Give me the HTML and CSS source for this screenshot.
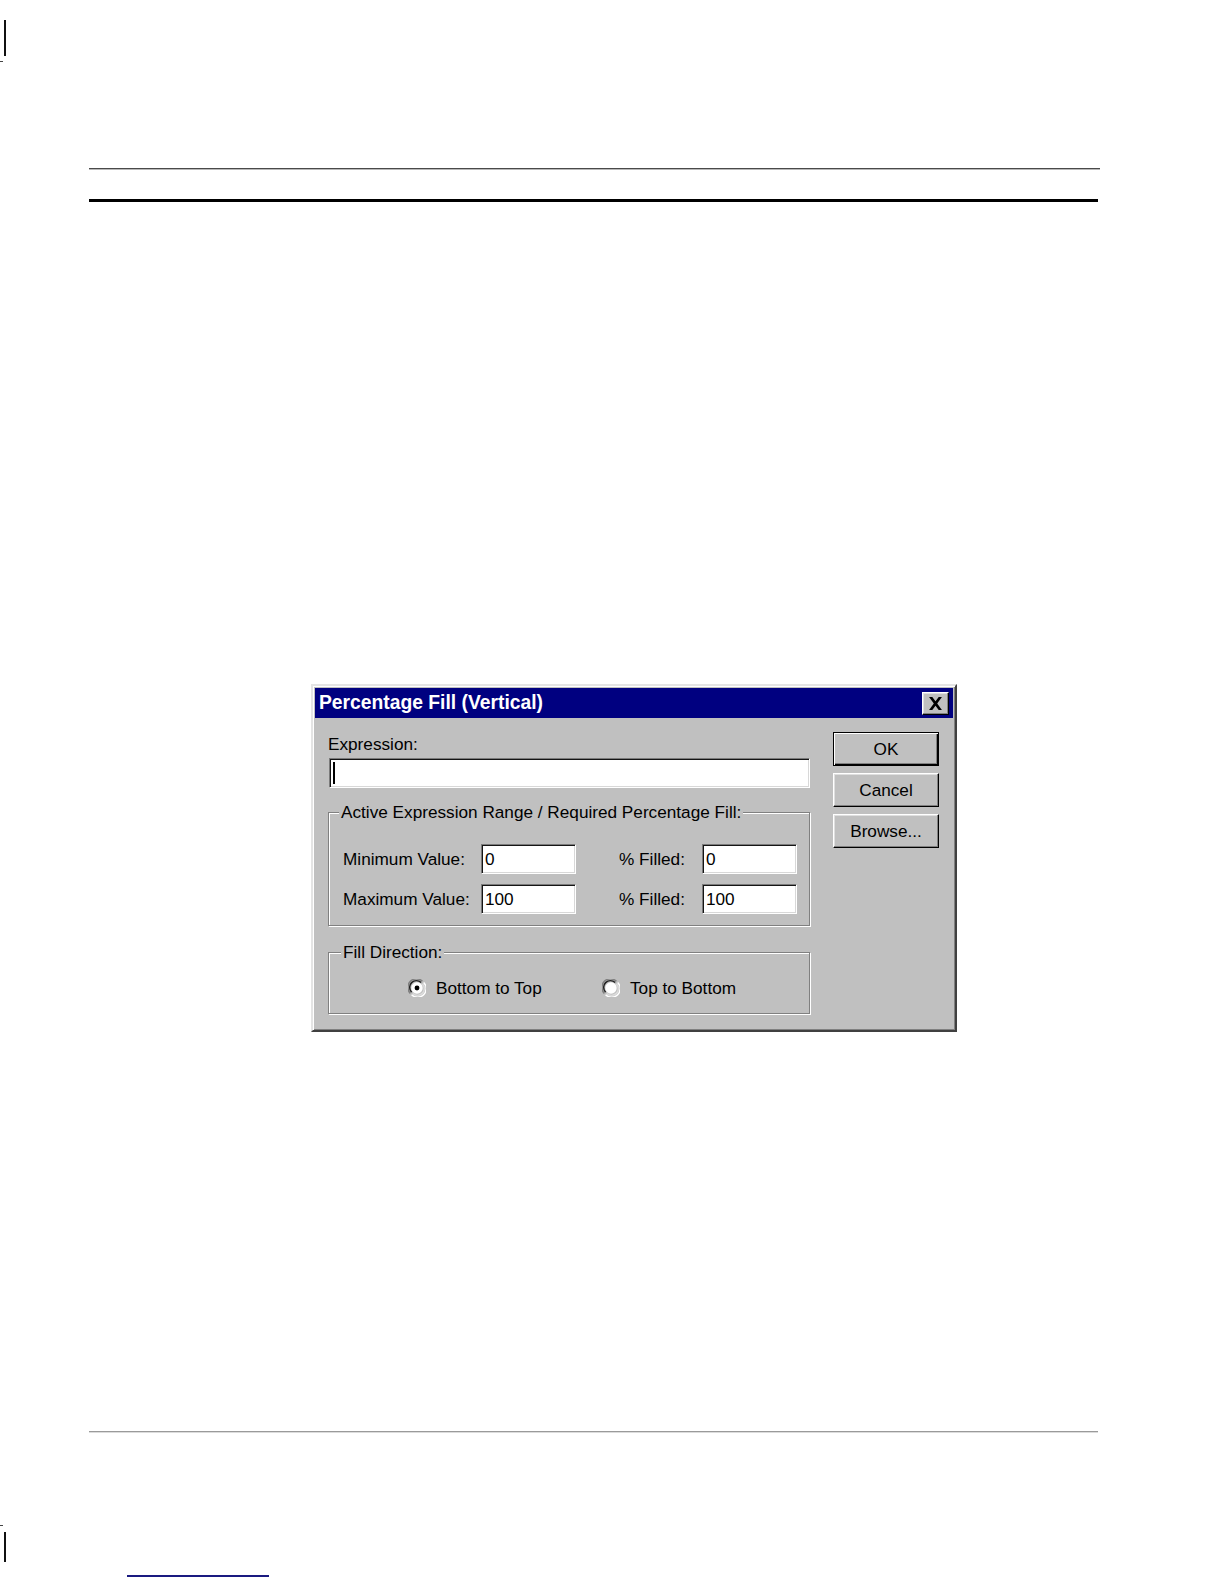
FILE: index.html
```html
<!DOCTYPE html>
<html>
<head>
<meta charset="utf-8">
<title>Percentage Fill (Vertical)</title>
<link rel="stylesheet" href="styles.css">
</head>
<body>
<div class="page">
  <div class="mark mark-top"></div>
  <div class="dash dash-top"></div>
  <div class="rule-thin"></div>
  <div class="rule-thick"></div>

  <div class="dialog">
    <div class="titlebar">
      <span class="title">Percentage Fill (Vertical)</span>
      <span class="close">
        <svg width="15" height="13" viewBox="0 0 14 12"><path d="M1 0 L4 0 L7 4 L10 0 L13 0 L8.6 6 L13 12 L10 12 L7 8 L4 12 L1 12 L5.4 6 Z" fill="#000"/></svg>
      </span>
    </div>
    <div class="body">
      <div class="left">
        <div class="label expr-label">Expression:</div>
        <div class="field expr-field"><span class="caret"></span></div>

        <div class="group group-range">
          <span class="legend">Active Expression Range / Required Percentage Fill:</span>
          <div class="range-grid">
            <span class="label">Minimum Value:</span>
            <div class="field"><span class="val">0</span></div>
            <span class="label label-pct">% Filled:</span>
            <div class="field"><span class="val">0</span></div>
            <span class="label">Maximum Value:</span>
            <div class="field"><span class="val">100</span></div>
            <span class="label label-pct">% Filled:</span>
            <div class="field"><span class="val">100</span></div>
          </div>
        </div>

        <div class="group group-dir">
          <span class="legend">Fill Direction:</span>
          <div class="radios">
            <span class="radio radio-first">
              <svg width="18" height="18" viewBox="0 0 17 17">
                <path d="M2.2 13.6 A7.8 7.8 0 0 1 13.6 2.2" fill="none" stroke="#808080" stroke-width="1.4"/>
                <path d="M3.4 12.4 A6.2 6.2 0 0 1 12.4 3.4" fill="none" stroke="#202020" stroke-width="1.4"/>
                <path d="M14.8 3.4 A7.8 7.8 0 0 1 3.4 14.8" fill="none" stroke="#ffffff" stroke-width="1.4"/>
                <path d="M13.6 4.6 A6.2 6.2 0 0 1 4.6 13.6" fill="none" stroke="#dcdcdc" stroke-width="1.4"/>
                <circle cx="8.5" cy="8.5" r="5.4" fill="#fff"/>
                <circle cx="8.5" cy="8.5" r="2.3" fill="#000"/>
              </svg>
              <span class="label">Bottom to Top</span>
            </span>
            <span class="radio">
              <svg width="18" height="18" viewBox="0 0 17 17">
                <path d="M2.2 13.6 A7.8 7.8 0 0 1 13.6 2.2" fill="none" stroke="#808080" stroke-width="1.4"/>
                <path d="M3.4 12.4 A6.2 6.2 0 0 1 12.4 3.4" fill="none" stroke="#202020" stroke-width="1.4"/>
                <path d="M14.8 3.4 A7.8 7.8 0 0 1 3.4 14.8" fill="none" stroke="#ffffff" stroke-width="1.4"/>
                <path d="M13.6 4.6 A6.2 6.2 0 0 1 4.6 13.6" fill="none" stroke="#dcdcdc" stroke-width="1.4"/>
                <circle cx="8.5" cy="8.5" r="5.4" fill="#fff"/>
              </svg>
              <span class="label">Top to Bottom</span>
            </span>
          </div>
        </div>
      </div>

      <div class="buttons">
        <div class="btn btn-default"><span class="btn-face">OK</span></div>
        <div class="btn"><span class="btn-face">Cancel</span></div>
        <div class="btn"><span class="btn-face">Browse...</span></div>
      </div>
    </div>
  </div>

  <div class="rule-bottom"></div>
  <div class="dash dash-bottom"></div>
  <div class="mark mark-bottom"></div>
  <div class="link-line"></div>
</div>
</body>
</html>
```

FILE: styles.css
```css
html, body {
  margin: 0;
  padding: 0;
  background: #ffffff;
}

.page {
  width: 1224px;
  height: 1584px;
  overflow: hidden;
  font-family: "Liberation Sans", Arial, sans-serif;
}

.mark {
  width: 2px;
  background: #111;
  margin-left: 4px;
}

.mark-top {
  margin-top: 20px;
  height: 36px;
}

.dash {
  width: 3px;
  height: 1px;
  background: #444;
}

.dash-top {
  margin-top: 5px;
}

.rule-thin {
  margin-top: 106px;
  margin-left: 89px;
  width: 1011px;
  height: 1px;
  background: #4a4a4a;
  box-shadow: 0 1px 0 #b8b8b8;
}

.rule-thick {
  margin-top: 30px;
  margin-left: 89px;
  width: 1009px;
  height: 3px;
  background: #000;
}

/* ---------- dialog ---------- */
.dialog {
  margin-top: 482px;
  margin-left: 311px;
  width: 646px;
  height: 348px;
  box-sizing: border-box;
  background: #c0c0c0;
  border: 2px solid;
  border-color: #e4e4e4 #404040 #404040 #e4e4e4;
  box-shadow: inset 1px 1px 0 #fff, inset -1px -1px 0 #808080;
  padding: 2px;
  color: #000;
  font-size: 17.2px;
}

.titlebar {
  height: 30px;
  background: #000080;
  display: flex;
  align-items: center;
  justify-content: space-between;
  padding: 0 4px 0 4px;
}

.title {
  color: #fff;
  font-weight: bold;
  font-size: 19.3px;
}

.close {
  width: 27px;
  height: 23px;
  box-sizing: border-box;
  background: #c0c0c0;
  border: 1px solid;
  border-color: #fff #000 #000 #fff;
  box-shadow: inset -1px -1px 0 #808080, inset 1px 1px 0 #dfdfdf;
  display: flex;
  align-items: center;
  justify-content: center;
}

.body {
  display: flex;
  gap: 23px;
  padding: 14px 14px 0 13px;
}

.left {
  width: 482px;
}

.label {
  white-space: nowrap;
  line-height: 20px;
}

.expr-label {
  margin-top: 2px;
  height: 20px;
}

.field {
  height: 30px;
  box-sizing: border-box;
  background: #fff;
  border: 1px solid;
  border-color: #7a7a7a #ffffff #ffffff #7a7a7a;
  box-shadow: inset 1px 1px 0 #151515, inset -1px -1px 0 #d8d8d8;
  display: flex;
  align-items: center;
  padding-left: 3px;
}

.expr-field {
  margin-top: 4px;
  margin-left: 1px;
  width: 481px;
}

.caret {
  width: 2px;
  height: 22px;
  background: #000;
}

.val {
  line-height: 20px;
}

/* ---------- group boxes ---------- */
.group {
  position: relative;
  box-sizing: border-box;
  border: 1px solid #808080;
  box-shadow: inset 1px 1px 0 #fff, 1px 1px 0 #fff;
}

.legend {
  position: absolute;
  top: -11px;
  left: 10px;
  padding: 0 2px;
  background: #c0c0c0;
  line-height: 20px;
  white-space: nowrap;
}

.group-range {
  margin-top: 24px;
  height: 114px;
  padding: 31px 0 0 14px;
}

.range-grid {
  display: grid;
  grid-template-columns: 138px 95px 126px 95px;
  grid-template-rows: 30px 30px;
  row-gap: 10px;
  align-items: center;
}

.label-pct {
  margin-left: 43px;
}

.group-dir {
  margin-top: 26px;
  height: 62px;
  padding: 25px 0 0 79px;
}

.group-dir .legend {
  left: 12px;
}

.radios {
  display: flex;
  align-items: center;
  height: 20px;
}

.radio {
  display: inline-flex;
  align-items: center;
  gap: 10px;
}

.radio svg {
  display: block;
}

.radio-first {
  width: 194px;
}

/* ---------- buttons ---------- */
.buttons {
  display: flex;
  flex-direction: column;
  gap: 7px;
  width: 106px;
}

.btn {
  height: 34px;
  box-sizing: border-box;
  background: #c0c0c0;
  border: 1px solid;
  border-color: #fff #000 #000 #fff;
  box-shadow: inset -1px -1px 0 #808080, inset 1px 1px 0 #dfdfdf;
  display: flex;
  align-items: center;
  justify-content: center;
}

.btn-face {
  line-height: 20px;
}

.btn-default {
  border: 1px solid #000;
  box-shadow: inset 1px 1px 0 #fff, inset -1px -1px 0 #000, inset -2px -2px 0 #808080;
}

/* ---------- footer ---------- */
.rule-bottom {
  margin-top: 399px;
  margin-left: 89px;
  width: 1009px;
  height: 1px;
  background: #9a9a9a;
  box-shadow: 0 1px 0 #dcdcdc;
}

.dash-bottom {
  margin-top: 93px;
}

.mark-bottom {
  margin-top: 6px;
  height: 30px;
}

.link-line {
  margin-top: 13px;
  margin-left: 127px;
  width: 142px;
  height: 2px;
  background: #1a1a80;
}
```
